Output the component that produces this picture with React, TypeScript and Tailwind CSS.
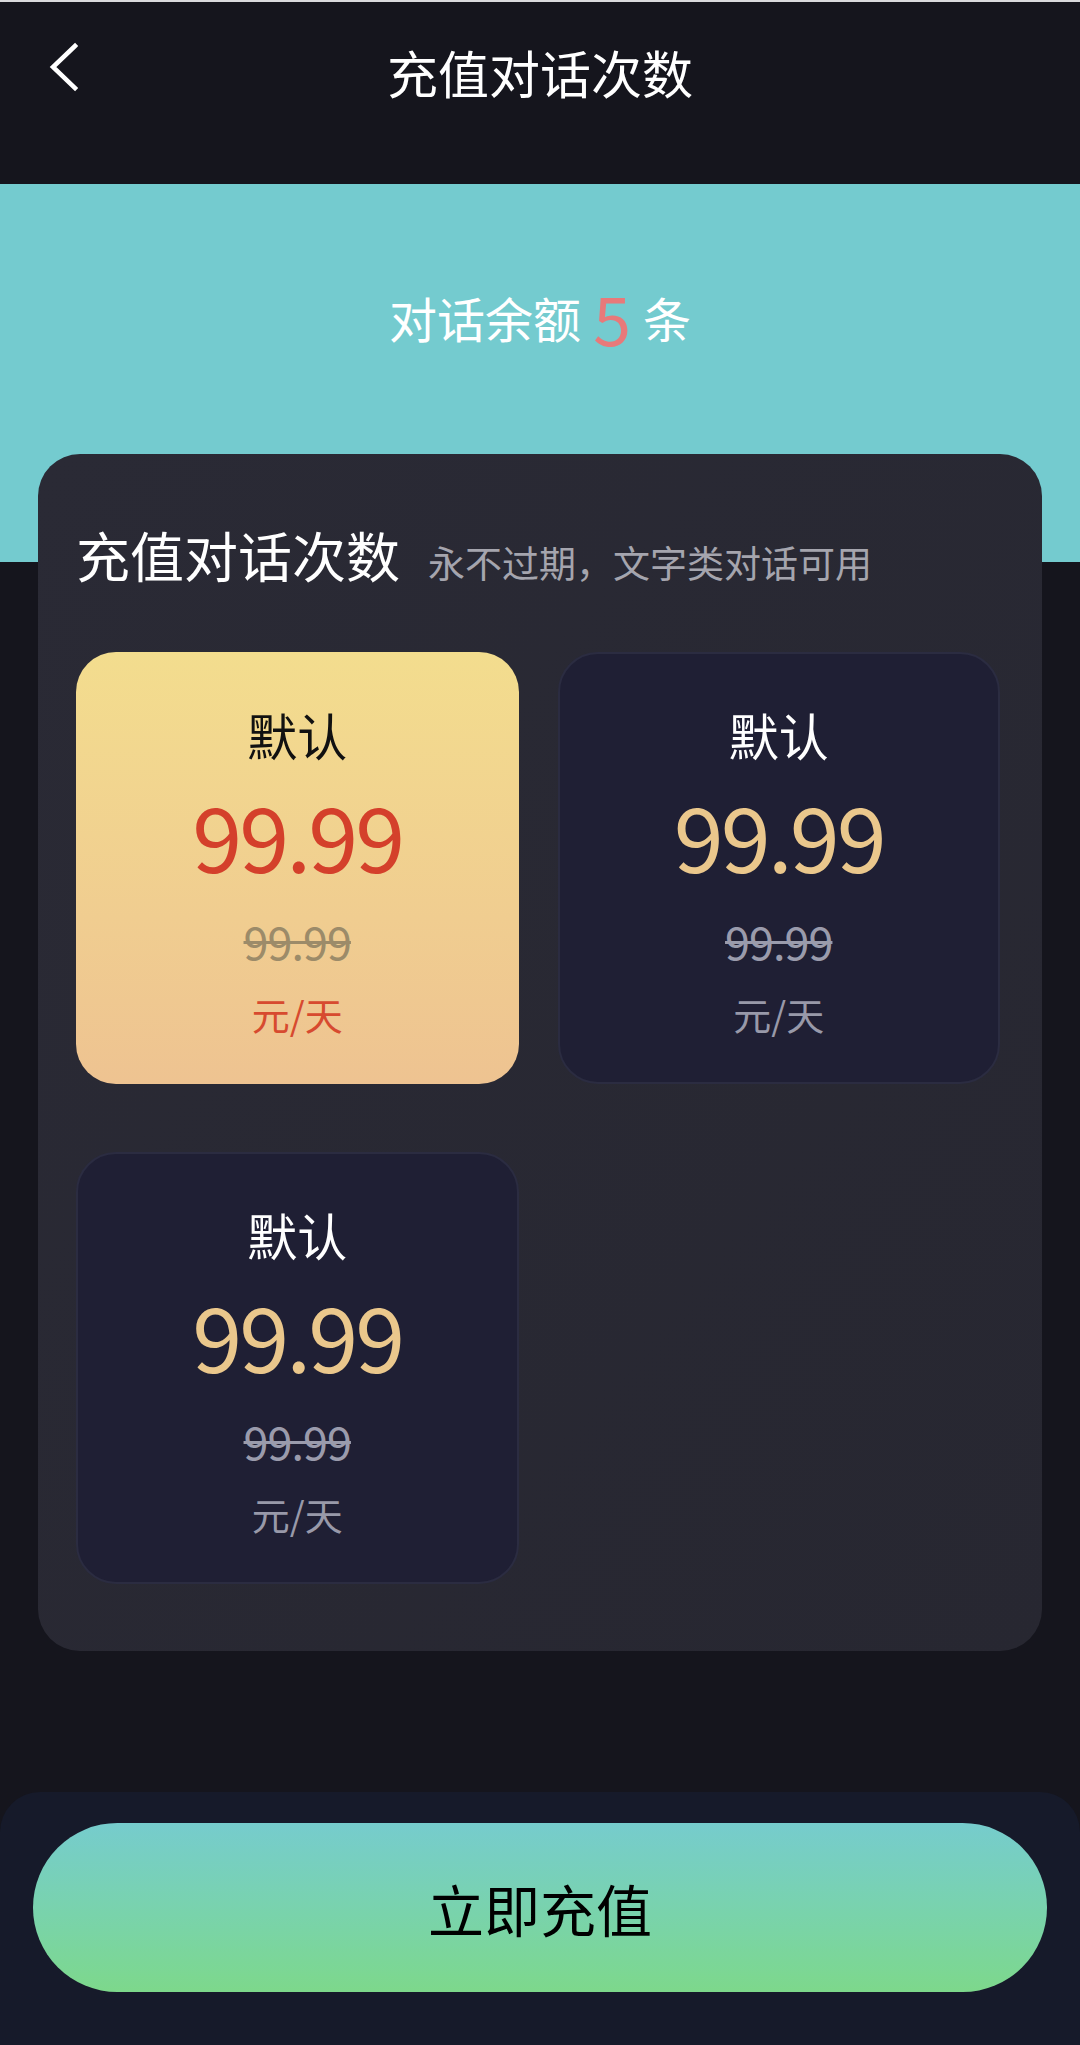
import type { ReactNode } from "react";

interface Plan {
  name: string;
  price: string;
  original: string;
  unit: string;
}

const plans: Plan[] = [
  { name: "默认", price: "99.99", original: "99.99", unit: "元/天" },
  { name: "默认", price: "99.99", original: "99.99", unit: "元/天" },
  { name: "默认", price: "99.99", original: "99.99", unit: "元/天" },
];

const font = { fontFamily: '"Noto Sans CJK SC", "Noto Sans", sans-serif' };

function BackIcon() {
  return (
    <svg width="34" height="52" viewBox="0 0 34 52" fill="none">
      <polyline
        points="27,4 5,25 27,46"
        stroke="#ffffff"
        strokeWidth="4.5"
        strokeLinecap="square"
        strokeLinejoin="miter"
      />
    </svg>
  );
}

function PlanCard({ plan, active }: { plan: Plan; active: boolean }) {
  return (
    <div
      className={
        active
          ? "h-[432px] rounded-[40px] bg-gradient-to-b from-[#f3dd8e] to-[#eec391] flex flex-col items-center pt-[52px]"
          : "h-[432px] rounded-[40px] bg-[#1f1f34] border-2 border-[#2b2c41] flex flex-col items-center pt-[50px]"
      }
    >
      <div className={active ? "text-[50px] leading-[60px] text-[#111111]" : "text-[50px] leading-[60px] text-white"}>
        {plan.name}
      </div>
      <div
        className={
          active
            ? "mt-[29px] text-[90px] leading-[82px] tracking-[-3px] text-[#d4402b]"
            : "mt-[29px] text-[90px] leading-[82px] tracking-[-3px] text-[#eac78c]"
        }
      >
        {plan.price}
      </div>
      <div
        className={
          active
            ? "mt-[42px] text-[45px] leading-[48px] tracking-[-1px] line-through decoration-[3px] text-[#9c8b69]"
            : "mt-[42px] text-[45px] leading-[48px] tracking-[-1px] line-through decoration-[3px] text-[#9a9bac]"
        }
      >
        {plan.original}
      </div>
      <div className={active ? "mt-[25px] text-[38px] leading-[48px] text-[#d74a2f]" : "mt-[25px] text-[38px] leading-[48px] text-[#9899a9]"}>
        {plan.unit}
      </div>
    </div>
  );
}

function Section({ children }: { children: ReactNode }) {
  return (
    <div className="mx-[38px] -mt-[108px] rounded-[42px] bg-gradient-to-br from-[#2a2a35] to-[#272731] pl-[38px] pr-[42px] pt-[70px] pb-[67px]">
      {children}
    </div>
  );
}

export default function App() {
  return (
    <div className="w-full min-h-[2045px] bg-[#15151d] flex flex-col" style={font}>
      {/* Top bar */}
      <div className="h-[184px] border-t-2 border-[#d9d9dc]">
        <div className="relative h-[140px] flex items-center justify-center">
          <div className="absolute left-[48px] top-[40px]">
            <BackIcon />
          </div>
          <h1 className="text-[51px] leading-[60px] text-white">充值对话次数</h1>
        </div>
      </div>

      {/* Balance */}
      <div className="h-[378px] bg-[#74cbcf] pt-[97px]">
        <div className="h-[72px] flex items-center justify-center text-white">
          <span className="text-[48px] leading-[60px]">对话余额</span>
          <span className="mx-[12px] text-[68px] leading-[72px] text-[#e8797a]">5</span>
          <span className="text-[48px] leading-[60px]">条</span>
        </div>
      </div>

      {/* Plans */}
      <Section>
        <div className="flex items-baseline">
          <h2 className="text-[54px] leading-[62px] text-white">充值对话次数</h2>
          <span className="ml-[28px] text-[37px] leading-[48px] text-[#a5a5ae]">永不过期，文字类对话可用</span>
        </div>
        <div className="mt-[66px] grid grid-cols-2 gap-x-[39px] gap-y-[68px]">
          {plans.map((p, i) => (
            <PlanCard key={i} plan={p} active={i === 0} />
          ))}
        </div>
      </Section>

      <div className="flex-1" />

      {/* Bottom action */}
      <div className="mt-[139px] h-[253px] rounded-t-[40px] bg-[#161a2a] px-[33px] pt-[31px]">
        <button className="w-full h-[169px] rounded-full bg-gradient-to-b from-[#76cccd] to-[#7dd88b] flex items-center justify-center">
          <span className="text-[56px] leading-[60px] text-black">立即充值</span>
        </button>
      </div>
    </div>
  );
}
